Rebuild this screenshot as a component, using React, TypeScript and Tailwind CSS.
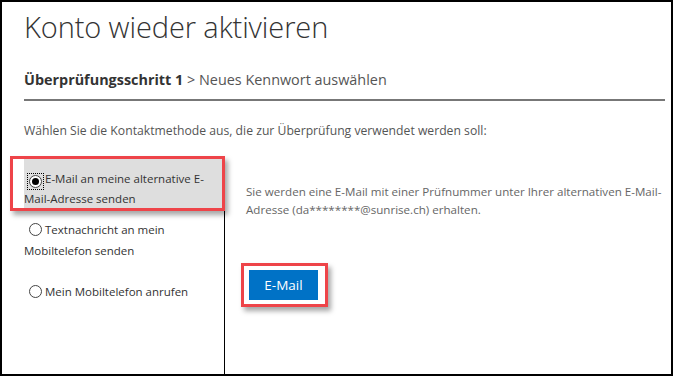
import type { ReactNode } from 'react'

const FONT = "font-['Open_Sans','Noto_Sans',sans-serif]"

function Radio({ checked = false }: { checked?: boolean }) {
  return (
    <span className={`relative inline-flex items-center justify-center align-[-2px] ml-[5px] mr-[3px] w-[13px] h-[13px] ${checked ? 'outline outline-1 outline-dotted outline-black outline-offset-[1px]' : ''}`}>
      <span className="w-[13px] h-[13px] rounded-full border border-[#444] bg-white flex items-center justify-center">
        {checked && <span className="w-[7px] h-[7px] rounded-full bg-black" />}
      </span>
    </span>
  )
}

function Marked({ children, className = '' }: { children: ReactNode; className?: string }) {
  return (
    <div className={`relative ${className}`}>
      {children}
      <span className="pointer-events-none absolute border-[3px] border-[#ee4449] shadow-[3px_4px_5px_rgba(0,0,0,0.35)] inset-0" />
    </div>
  )
}

export default function App() {
  return (
    <div className={`w-[673px] h-[376px] bg-white border-2 border-black overflow-hidden flex flex-col ${FONT}`}>
      <div className="pl-[22px] pr-[8px]">
        <h1 className="mt-[5px] text-[29px] leading-[40px] font-light text-[#333] tracking-[-0.1px]">Konto wieder aktivieren</h1>
        <div className="mt-[22px] text-[14.4px] leading-[22px] text-[#555]">
          <span className="font-bold text-[#333]">Überprüfungsschritt 1</span> &gt; Neues Kennwort auswählen
        </div>
        <div className="mt-[8px] h-[2px] bg-[#777] w-[641px]" />
        <p className="mt-[21px] text-[12.2px] leading-[18px] text-[#555]">
          Wählen Sie die Kontaktmethode aus, die zur Überprüfung verwendet werden soll:
        </p>
      </div>

      <div className="flex flex-1 mt-[16px]">
        <div className="w-[223px] border-r border-black pt-[3px] text-[11.5px] leading-[20px] text-[#333]">
          <Marked className="-mt-[3px] ml-[8px] -mr-[1px] pt-[3px] pl-[14px] pr-[2px] pb-[2px]">
            <div className="bg-[#dedede] pt-[10px]">
              <Radio checked />E-Mail an meine alternative E-Mail-Adresse senden
            </div>
          </Marked>
          <div className="pl-[22px] pr-[4px] pt-[8px] pb-[10px] leading-[21px]">
            <Radio />Textnachricht an mein Mobiltelefon senden
          </div>
          <div className="pl-[22px] pr-[4px] pt-[11px]">
            <Radio />Mein Mobiltelefon anrufen
          </div>
        </div>

        <div className="flex-1 pl-[21px] pt-[27px]">
          <p className="text-[11.6px] leading-[18px] text-[#666]">
            Sie werden eine E-Mail mit einer Prüfnummer unter Ihrer alternativen E-Mail-Adresse (da********@sunrise.ch) erhalten.
          </p>
          <Marked className="mt-[44px] inline-block pl-[8px] pr-[10px] py-[7px] ml-[-5px]">
            <button className="block w-[69px] h-[30px] bg-[#0072c6] text-white text-[13.5px]">E-Mail</button>
          </Marked>
        </div>
      </div>
    </div>
  )
}
